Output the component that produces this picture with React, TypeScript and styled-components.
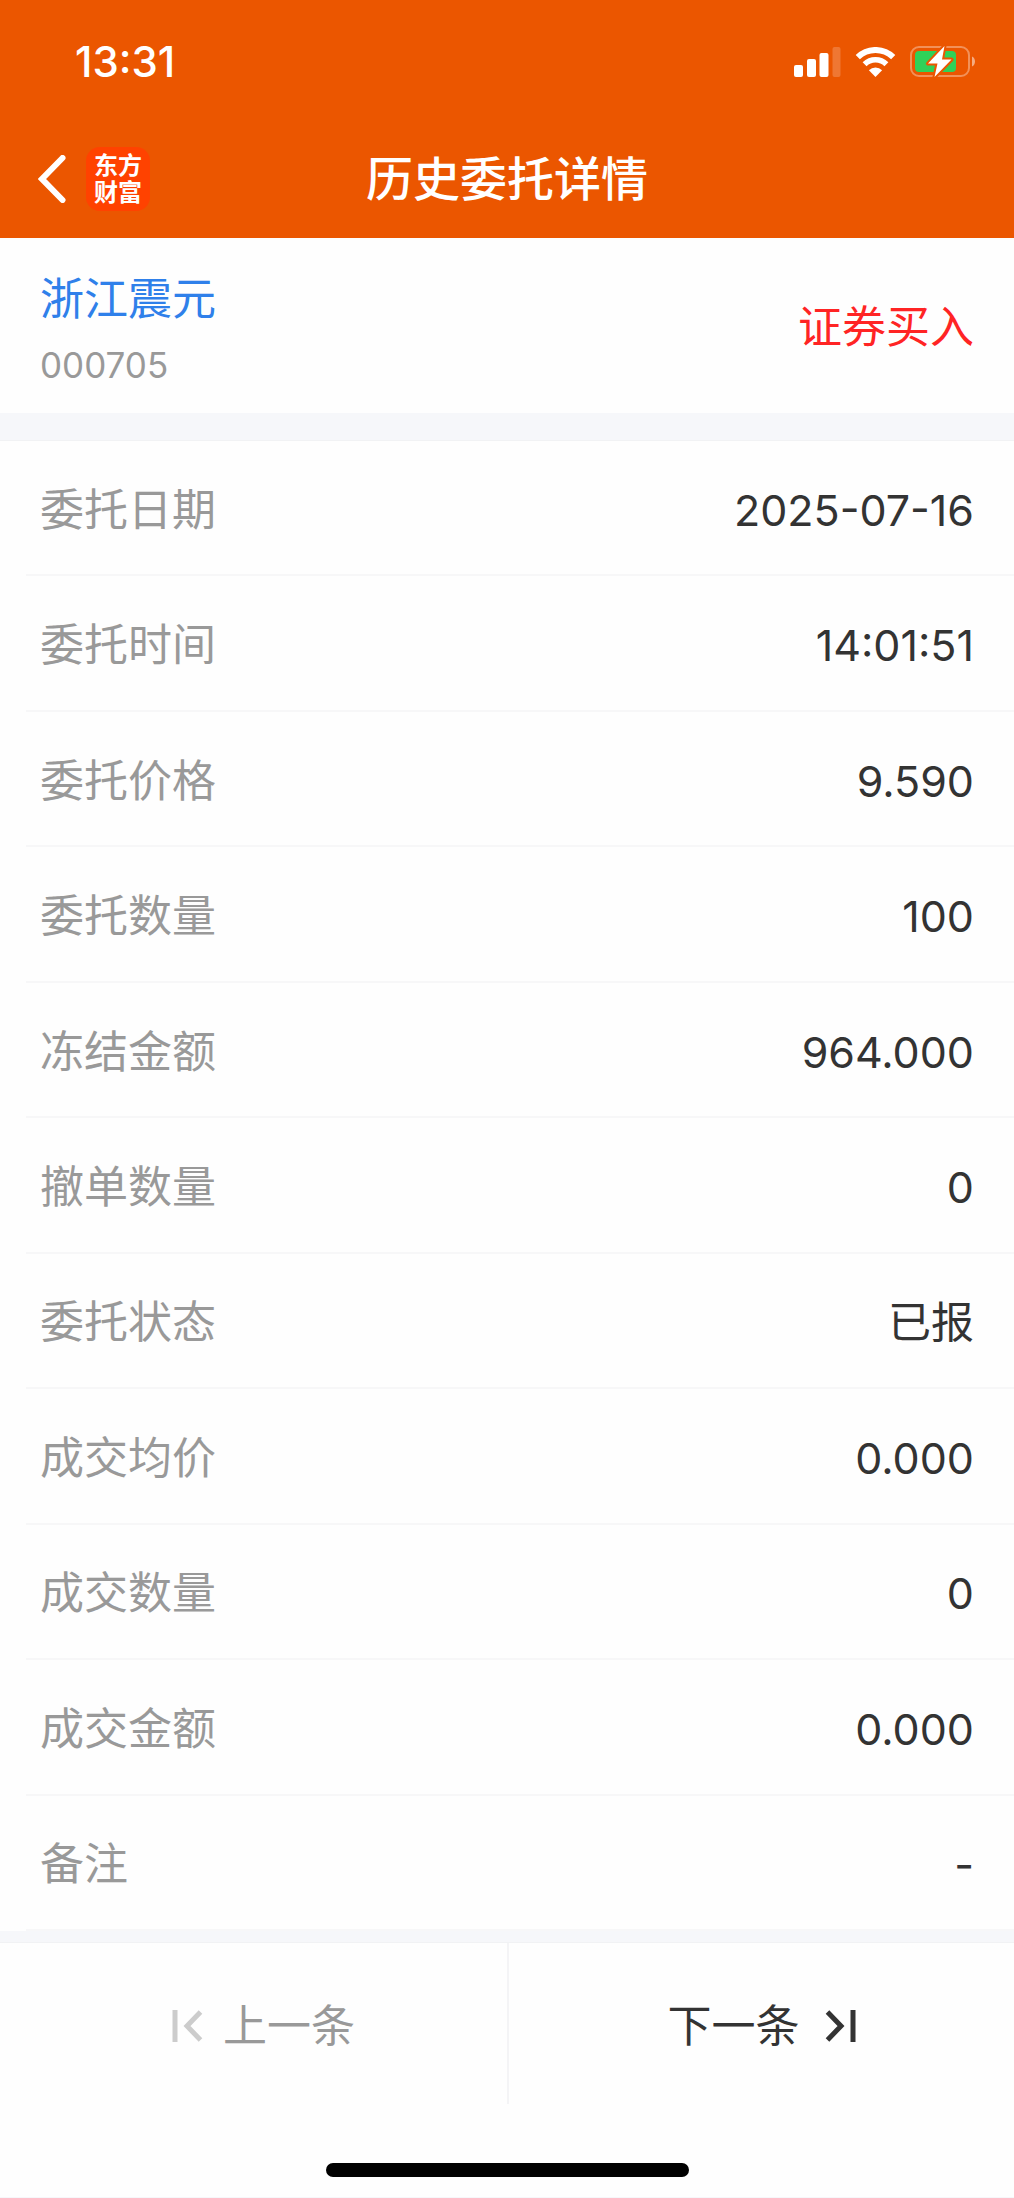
import React from "react";
import styled, { createGlobalStyle } from "styled-components";

const GlobalStyle = createGlobalStyle`
  *, *::before, *::after { box-sizing: border-box; }
  body {
    margin: 0;
    background: #fefefe;
    color: #333;
    font-family: Inter, "Noto Sans CJK SC", sans-serif;
    font-size: 44px;
    line-height: 60px;
  }
`;

const Page = styled.main`
  display: flex;
  flex-direction: column;
  min-height: 100vh;
`;

const TopBar = styled.header`
  background: #eb5600;
  color: #fff;
`;

const StatusBar = styled.div`
  display: flex;
  justify-content: space-between;
  align-items: center;
  height: 120px;
  padding: 4px 38px 0 75px;
`;

const Clock = styled.time`
  font-size: 42px;
  font-weight: 500;
`;

const StatusIcons = styled.div`
  display: flex;
  align-items: center;
  gap: 14px;
`;

const NavBar = styled.nav`
  display: grid;
  grid-template-columns: 1fr auto 1fr;
  align-items: center;
  height: 118px;
  padding: 0 38px;
`;

const NavStart = styled.div`
  display: flex;
  align-items: center;
  gap: 20px;
`;

const IconButton = styled.button`
  display: flex;
  padding: 0;
  border: 0;
  background: none;
  color: inherit;
`;

const Logo = styled.a`
  width: 64px;
  height: 64px;
  padding: 3px 8px;
  border-radius: 14px;
  background: #ff4200;
  color: #fff;
  font-family: "Noto Sans CJK SC", sans-serif;
  font-size: 24px;
  font-weight: 700;
  line-height: 27px;
  text-decoration: none;
`;

const Title = styled.h1`
  margin: 0;
  font-size: 47px;
  font-weight: 500;
`;

const Summary = styled.section`
  display: flex;
  justify-content: space-between;
  align-items: center;
  padding: 31px 40px 24px;
`;

const StockName = styled.h2`
  margin: 0 0 12px;
  color: #2f80ea;
  font-size: 44px;
  font-weight: 400;
`;

const StockCode = styled.p`
  margin: 0;
  color: #999;
  font-size: 35px;
  line-height: 48px;
`;

const Side = styled.strong`
  padding-bottom: 5px;
  color: #ff2424;
  font-weight: 400;
`;

const Divider = styled.div<{ $size: number }>`
  height: ${(p) => p.$size}px;
  background: #f6f7fa;
  border-bottom: 1px solid #f1f2f4;
`;

const Details = styled.dl`
  display: grid;
  grid-auto-rows: 1fr;
  flex: 1;
  margin: 0;
  padding-left: 26px;
`;

const Row = styled.div`
  display: flex;
  justify-content: space-between;
  align-items: center;
  min-height: 120px;
  padding: 4px 40px 0 14px;
  border-bottom: 2px solid #f7f7f8;
`;

const Label = styled.dt`
  color: #999;
`;

const Value = styled.dd`
  margin: 0;
  font-size: 43px;
`;

const Pager = styled.footer`
  display: grid;
  grid-template-columns: 1fr 1fr;
  height: 161px;
`;

const PagerButton = styled.button`
  display: flex;
  justify-content: center;
  align-items: center;
  gap: 20px;
  padding: 4px 0 0;
  border: 0;
  background: none;
  color: #333;
  font: inherit;

  &:disabled {
    padding-left: 20px;
    color: #999;
  }

  & + & {
    gap: 25px;
    border-left: 2px solid #f4f4f6;
  }
`;

const HomeArea = styled.div`
  display: flex;
  justify-content: center;
  align-items: flex-end;
  height: 94px;
  padding-bottom: 20px;
  border-bottom: 1px solid #f6f7fa;
`;

const HomeIndicator = styled.div`
  width: 363px;
  height: 14px;
  border-radius: 7px;
  background: #000;
`;

const SignalIcon = () => (
  <svg width="47" height="30" viewBox="0 0 47 30" fill="#fff" aria-hidden="true">
    <rect x="0" y="18" width="9" height="12" rx="2" />
    <rect x="13" y="12" width="9" height="18" rx="2" />
    <rect x="25.500" y="6" width="9" height="24" rx="2" />
    <rect x="38.500" y="0" width="8" height="30" rx="2" opacity="0.2" />
  </svg>
);

const WifiIcon = () => (
  <svg width="41" height="30" viewBox="0 0 41 30" fill="none" aria-hidden="true">
    <path d="M2.800 10.200a25.300 25.300 0 0 1 35.400 0" stroke="#fff" strokeWidth="6" />
    <path d="M9.600 17.200a15.500 15.500 0 0 1 21.800 0" stroke="#fff" strokeWidth="5.600" />
    <path d="M20.500 30l-6.600-6.700a9.400 9.400 0 0 1 13.200 0z" fill="#fff" />
  </svg>
);

const BatteryIcon = () => (
  <svg width="66" height="32" viewBox="0 0 66 32" fill="none" aria-hidden="true">
    <rect x="1" y="1" width="58" height="29" rx="8" stroke="#fff" strokeOpacity="0.35" strokeWidth="2" />
    <path d="M62 10.500c4 1.500 4 8.500 0 10z" fill="#fff" fillOpacity="0.5" />
    <rect x="5" y="5" width="41" height="21" rx="4" fill="#30d158" />
    <path
      d="M34.500 0L18 17.500h9.500L24.500 31 41.500 13.500H32z"
      fill="#fff"
      stroke="#eb5600"
      strokeWidth="4"
      strokeLinejoin="round"
      paintOrder="stroke"
    />
  </svg>
);

const BackIcon = () => (
  <svg width="28" height="48" viewBox="0 0 28 48" fill="none" aria-hidden="true">
    <path d="M24.500 3L4 24l20.500 21" stroke="#fff" strokeWidth="6" strokeLinecap="round" strokeLinejoin="miter" />
  </svg>
);

const FirstIcon = () => (
  <svg width="31" height="32" viewBox="0 0 31 32" fill="none" stroke="#ccc" strokeWidth="5" aria-hidden="true">
    <path d="M3 0v32M28.500 2L15 16l13.500 14" />
  </svg>
);

const LastIcon = () => (
  <svg width="31" height="32" viewBox="0 0 31 32" fill="none" stroke="#333" strokeWidth="5" aria-hidden="true">
    <path d="M28 0v32M2.500 2L16 16 2.500 30" />
  </svg>
);

const fields: [string, string][] = [
  ["委托日期", "2025-07-16"],
  ["委托时间", "14:01:51"],
  ["委托价格", "9.590"],
  ["委托数量", "100"],
  ["冻结金额", "964.000"],
  ["撤单数量", "0"],
  ["委托状态", "已报"],
  ["成交均价", "0.000"],
  ["成交数量", "0"],
  ["成交金额", "0.000"],
  ["备注", "-"],
];

export default function App() {
  return (
    <>
      <GlobalStyle />
      <Page>
        <TopBar>
          <StatusBar>
            <Clock>13:31</Clock>
            <StatusIcons>
              <SignalIcon />
              <WifiIcon />
              <BatteryIcon />
            </StatusIcons>
          </StatusBar>
          <NavBar>
            <NavStart>
              <IconButton type="button" aria-label="返回">
                <BackIcon />
              </IconButton>
              <Logo href="#">东方财富</Logo>
            </NavStart>
            <Title>历史委托详情</Title>
          </NavBar>
        </TopBar>
        <Summary>
          <div>
            <StockName>浙江震元</StockName>
            <StockCode>000705</StockCode>
          </div>
          <Side>证券买入</Side>
        </Summary>
        <Divider $size={28} />
        <Details>
          {fields.map(([label, value]) => (
            <Row key={label}>
              <Label>{label}</Label>
              <Value>{value}</Value>
            </Row>
          ))}
        </Details>
        <Divider $size={12} />
        <Pager>
          <PagerButton type="button" disabled>
            <FirstIcon />
            上一条
          </PagerButton>
          <PagerButton type="button">
            下一条
            <LastIcon />
          </PagerButton>
        </Pager>
        <HomeArea>
          <HomeIndicator />
        </HomeArea>
      </Page>
    </>
  );
}
